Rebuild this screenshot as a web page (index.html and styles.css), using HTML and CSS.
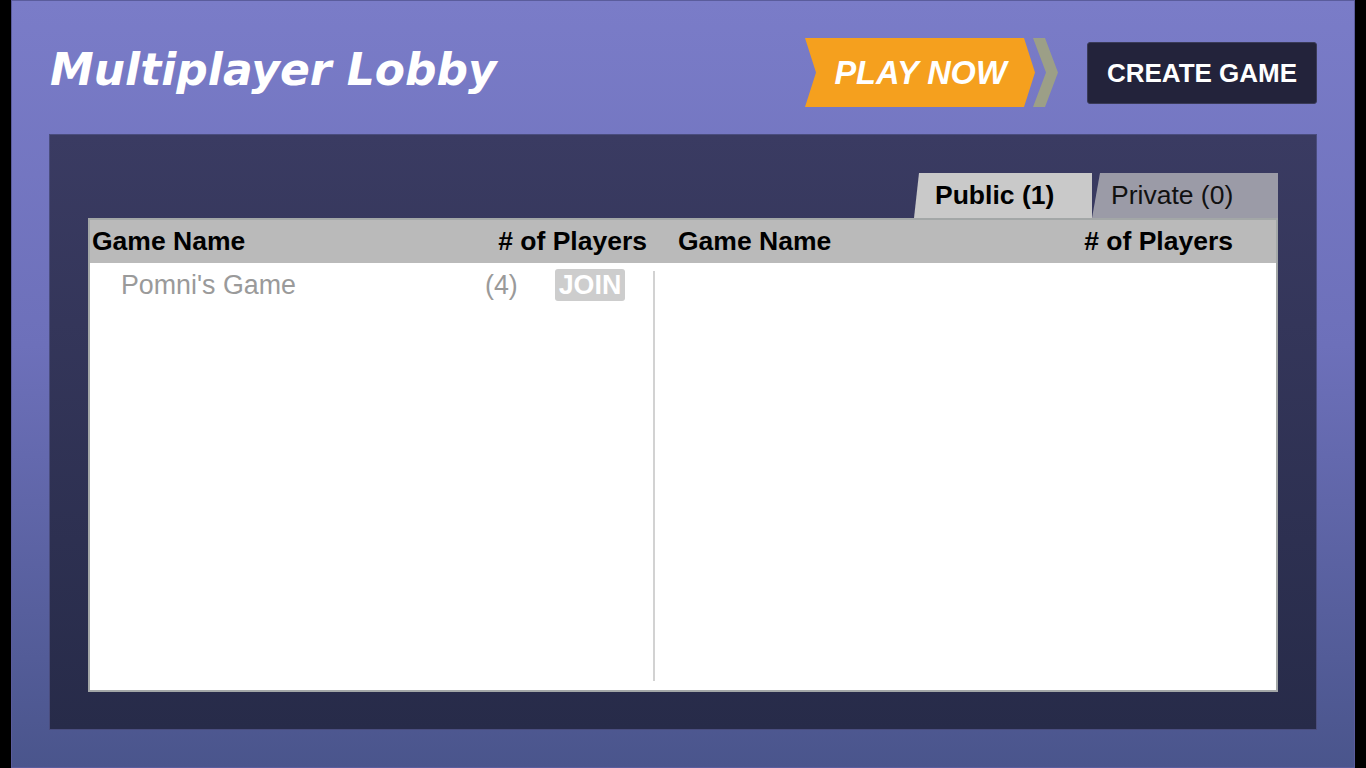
FILE: index.html
```html
<!DOCTYPE html>
<html lang="en">
<head>
<meta charset="utf-8">
<title>Multiplayer Lobby</title>
<link rel="stylesheet" href="styles.css">
</head>
<body>
<div class="app">
  <header class="header">
    <h1 class="title">Multiplayer Lobby</h1>
    <div class="actions">
      <div class="play">
        <div class="play-btn">PLAY NOW</div>
        <div class="play-chev"></div>
      </div>
      <div class="create-btn">CREATE GAME</div>
    </div>
  </header>
  <main class="panel">
    <div class="tabs">
      <div class="tab tab-public">Public (1)</div>
      <div class="tab tab-private">Private (0)</div>
    </div>
    <div class="table">
      <div class="thead">
        <div class="hcol hcol-left"><span>Game Name</span><span># of Players</span></div>
        <div class="hcol hcol-right"><span>Game Name</span><span># of Players</span></div>
      </div>
      <div class="tbody">
        <div class="list list-left">
          <div class="row">
            <span class="gname">Pomni's Game</span>
            <span class="gcount">(4)</span>
            <span class="join">JOIN</span>
          </div>
        </div>
        <div class="divider"></div>
        <div class="list list-right"></div>
      </div>
    </div>
  </main>
</div>
</body>
</html>
```
FILE: styles.css
```css
html, body {
  margin: 0;
  padding: 0;
  background: #000;
}

.app {
  width: 1344px;
  height: 768px;
  margin: 0 auto;
  box-sizing: border-box;
  border: 1px solid #5a5c9c;
  background: linear-gradient(to bottom, #7a7cc8 0%, #6d70ba 45%, #4a558c 100%);
  padding: 0 37px 37px 37px;
  display: flex;
  flex-direction: column;
  font-family: "Liberation Sans", Arial, sans-serif;
}

.header {
  height: 133px;
  flex: none;
  display: flex;
  justify-content: space-between;
  align-items: flex-start;
}

.title {
  margin: 47px 0 0 1px;
  font-family: "DejaVu Sans", sans-serif;
  font-weight: bold;
  font-style: italic;
  font-size: 44px;
  line-height: 44px;
  color: #fff;
}

.actions {
  display: flex;
  align-items: flex-start;
}

.play {
  display: flex;
  margin-top: 37px;
}

.play-btn {
  width: 230px;
  height: 69px;
  background: #f5a01e;
  clip-path: polygon(0 0, 219px 0, 230px 50%, 219px 100%, 0 100%, 11px 50%);
  color: #fff;
  font-weight: bold;
  font-style: italic;
  font-size: 32.5px;
  line-height: 71px;
  text-align: center;
  padding-left: 1px;
  box-sizing: border-box;
}

.play-chev {
  width: 25px;
  height: 69px;
  margin-left: -2px;
  background: #9c9f87;
  clip-path: polygon(0 0, 12px 0, 25px 50%, 12px 100%, 0 100%, 13px 50%);
}

.create-btn {
  margin-top: 41px;
  margin-left: 29px;
  width: 230px;
  height: 62px;
  box-sizing: border-box;
  background: #23233b;
  border: 1px solid #3a3b58;
  border-radius: 3px;
  color: #fff;
  font-weight: bold;
  font-size: 26px;
  line-height: 61px;
  text-align: center;
}

.panel {
  flex: 1;
  display: flex;
  flex-direction: column;
  border: 1px solid #4a4d7e;
  background: linear-gradient(to bottom, #3a3b62 0%, #272b49 100%);
  padding: 38px 38px 37px 38px;
  min-height: 0;
}

.tabs {
  height: 45px;
  flex: none;
  display: flex;
  justify-content: flex-end;
}

.tab {
  height: 45px;
  box-sizing: border-box;
  font-size: 26.5px;
  line-height: 45px;
  color: #111;
}

.tab-public {
  width: 178px;
  padding-left: 21px;
  background: #c9c9c9;
  font-weight: bold;
  color: #000;
  clip-path: polygon(5px 0, 100% 0, 100% 100%, 0 100%);
}

.tab-private {
  width: 186px;
  padding-left: 19px;
  background: #9b9ba7;
  clip-path: polygon(8px 0, 100% 0, 100% 100%, 0 100%);
}

.table {
  flex: 1;
  display: flex;
  flex-direction: column;
  border: 2px solid #a3a7a7;
  background: #fff;
  min-height: 0;
}

.thead {
  height: 43px;
  flex: none;
  display: flex;
  background: #bababa;
  font-weight: bold;
  font-size: 26.5px;
  color: #000;
}

.hcol {
  display: flex;
  justify-content: space-between;
  align-items: center;
  box-sizing: border-box;
}

.hcol-left {
  width: 586px;
  padding: 0 29px 0 2px;
}

.hcol-right {
  flex: 1;
  padding: 0 43px 0 2px;
}

.tbody {
  flex: 1;
  display: grid;
  grid-template-columns: 563px 2px 1fr;
}

.list-left {
  padding-top: 6px;
}

.divider {
  margin: 8px 0 9px;
  background: #d2d2d2;
}

.row {
  height: 32px;
  display: flex;
  align-items: center;
  padding-left: 31px;
  font-size: 26.8px;
  color: #9a9a9a;
}

.gname {
  width: 364px;
}

.gcount {
  width: 33px;
}

.join {
  margin-left: 37px;
  width: 70px;
  height: 32px;
  border-radius: 3px;
  background: #cdcdcd;
  color: #fff;
  font-weight: bold;
  text-align: center;
  line-height: 32px;
}
```
